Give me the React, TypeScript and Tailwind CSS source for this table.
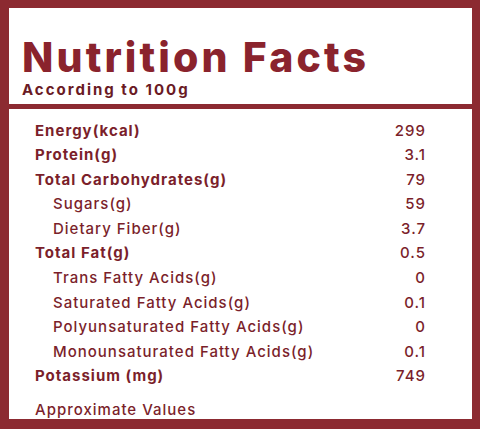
import React from "react";

const rows: { label: string; value: string; sub?: boolean }[] = [
  { label: "Energy(kcal)", value: "299" },
  { label: "Protein(g)", value: "3.1" },
  { label: "Total Carbohydrates(g)", value: "79" },
  { label: "Sugars(g)", value: "59", sub: true },
  { label: "Dietary Fiber(g)", value: "3.7", sub: true },
  { label: "Total Fat(g)", value: "0.5" },
  { label: "Trans Fatty Acids(g)", value: "0", sub: true },
  { label: "Saturated Fatty Acids(g)", value: "0.1", sub: true },
  { label: "Polyunsaturated Fatty Acids(g)", value: "0", sub: true },
  { label: "Monounsaturated Fatty Acids(g)", value: "0.1", sub: true },
  { label: "Potassium (mg)", value: "749" },
];

export default function App() {
  return (
    <div
      className="w-[480px] h-[429px] bg-[#8c2a31] pt-[8px] pl-[9px] pr-[8px] pb-[10px] flex flex-col text-[#7b1f2b]"
      style={{ fontFamily: "Inter, 'Noto Sans', sans-serif" }}
    >
      <div className="bg-white h-[100px] pl-[13px] pt-[29px]">
        <div className="text-[41px] leading-[40px] font-extrabold tracking-[3.1px] text-[#8a232d]">
          Nutrition Facts
        </div>
        <div className="text-[15px] leading-[18px] font-bold tracking-[2px] mt-[4px] text-[#6a1a24]">
          According to 100g
        </div>
      </div>
      <div className="bg-white flex-1 mt-[5px] pl-[26px] pr-[46px] pt-[9px] flex flex-col">
        {rows.map((r) => (
          <div
            key={r.label}
            className="flex justify-between items-center h-[24.6px] text-[15px] tracking-[1px]"
          >
            <span className={r.sub ? "pl-[18px] font-medium" : "font-bold"}>{r.label}</span>
            <span className="font-medium">{r.value}</span>
          </div>
        ))}
        <div className="mt-[12px] text-[15px] leading-[18px] font-medium tracking-[1px]">
          Approximate Values
        </div>
      </div>
    </div>
  );
}
